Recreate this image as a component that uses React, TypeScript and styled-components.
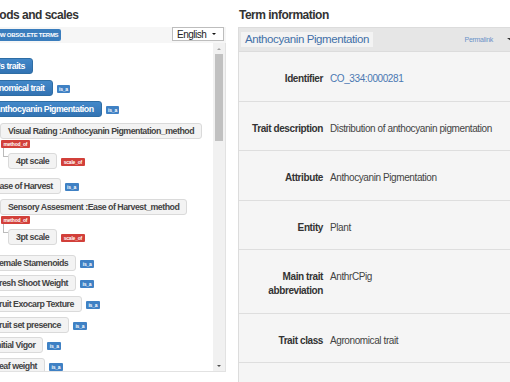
import React from "react";
import styled, { createGlobalStyle } from "styled-components";

const GlobalStyle = createGlobalStyle`
  html, body {
    margin: 0;
    padding: 0;
    background: #fff;
    overflow: hidden;
  }
  body {
    font-family: "Liberation Sans", Arial, Helvetica, sans-serif;
    color: #333;
  }
`;

const Page = styled.div`
  width: 510px;
  height: 382px;
  overflow: hidden;
  display: flex;
  padding-top: 6px;
  box-sizing: border-box;
`;

const LeftCol = styled.section`
  flex: none;
  width: 288px;
  margin-left: -62px;
  display: flex;
  flex-direction: column;
`;

const RightCol = styled.section`
  flex: none;
  width: 282px;
  margin-left: 12px;
  display: flex;
  flex-direction: column;
`;

const Heading = styled.h3<{ $inset?: number }>`
  margin: 0 0 3px;
  padding-left: ${p => p.$inset ?? 0}px;
  font-size: 12px;
  letter-spacing: -0.5px;
  line-height: 18px;
  font-weight: bold;
  color: #333;
  white-space: nowrap;
`;

const Toolbar = styled.div`
  display: flex;
  align-items: flex-end;
  justify-content: space-between;
  height: 16px;
  box-sizing: border-box;
  padding: 0 2px 2px 47px;
  background: #f6f6f6;
`;

const ObsoleteButton = styled.span`
  height: 12px;
  padding: 0 3px;
  line-height: 12px;
  font-size: 6px;
  letter-spacing: -0.3px;
  font-weight: bold;
  text-transform: uppercase;
  color: #fff;
  background: #3a7dbd;
  border-radius: 2px;
  white-space: nowrap;
`;

const LangSelect = styled.div`
  display: flex;
  align-items: center;
  justify-content: space-between;
  width: 52px;
  height: 14px;
  box-sizing: border-box;
  padding: 0 7px 0 4px;
  border: 1px solid #bdbdbd;
  background: #fff;
  font-size: 10px;
  letter-spacing: -0.5px;
  color: #222;
  align-self: flex-start;
`;

const Triangle = styled.span<{ $dir?: "up" | "down"; $size?: number; $color?: string }>`
  width: 0;
  height: 0;
  border-left: ${p => p.$size ?? 2}px solid transparent;
  border-right: ${p => p.$size ?? 2}px solid transparent;
  ${p =>
    p.$dir === "up"
      ? `border-bottom: ${(p.$size ?? 2) - 0.5}px solid ${p.$color ?? "#111"};`
      : `border-top: ${(p.$size ?? 2) - 0.5}px solid ${p.$color ?? "#111"};`}
`;

const TreeBox = styled.div`
  flex: none;
  height: 329px;
  display: flex;
  box-sizing: border-box;
  border: 1px solid #e2e2e2;
  border-top: none;
  background: #fff;
`;

const TreeContent = styled.div`
  flex: 1;
  min-width: 0;
  overflow: hidden;
  padding: 15px 0 0 19.3px;
  display: flex;
  flex-direction: column;
  align-items: flex-start;
`;

const Scrollbar = styled.div`
  flex: none;
  width: 12px;
  display: flex;
  flex-direction: column;
  background: #f1f1f1;
`;

const ScrollArrow = styled.div`
  height: 11px;
  display: flex;
  align-items: center;
  justify-content: center;
`;

const ScrollThumb = styled.div`
  height: 87px;
  margin: 0 2px;
  background: #c1c1c1;
`;

const ScrollTrack = styled.div`
  flex: 1;
`;

const LEVEL_STEP = 13.9;

const TreeRow = styled.div<{ $level: number; $gap?: number }>`
  display: flex;
  align-items: center;
  gap: 4px;
  margin-left: ${p => p.$level * LEVEL_STEP}px;
  margin-top: ${p => p.$gap ?? 0}px;
`;

const MethodBlock = styled.div<{ $level: number; $gap?: number }>`
  display: flex;
  flex-direction: column;
  align-items: flex-start;
  margin-left: ${p => p.$level * LEVEL_STEP}px;
  margin-top: ${p => p.$gap ?? 0}px;
`;

const ScaleRow = styled.div`
  position: relative;
  display: flex;
  align-items: center;
  gap: 4px;
  margin: 5px 0 0 8px;

  &::before {
    content: "";
    position: absolute;
    left: -5px;
    top: -5px;
    width: 4px;
    height: 8px;
    border-left: 1px solid #bbb;
    border-bottom: 1px solid #bbb;
  }
`;

const NodeButton = styled.span<{ $primary?: boolean }>`
  display: inline-block;
  height: 16px;
  box-sizing: border-box;
  padding: 0 7px;
  line-height: 14px;
  font-size: 8.8px;
  letter-spacing: -0.5px;
  font-weight: bold;
  white-space: nowrap;
  border-radius: 3px;
  border: 1px solid ${p => (p.$primary ? "#2e6da4" : "#dadada")};
  background: ${p => (p.$primary ? "linear-gradient(#4388c9, #3273b3)" : "#f3f3f3")};
  color: ${p => (p.$primary ? "#fff" : "#444")};
`;

type RelKind = "is_a" | "method_of" | "scale_of";

const RelBadge = styled.span<{ $kind: RelKind }>`
  display: inline-block;
  height: 8px;
  padding: 0 2.5px;
  margin-top: 2px;
  line-height: 8px;
  font-size: 5px;
  letter-spacing: -0.2px;
  font-weight: bold;
  color: #fff;
  border-radius: 1px;
  white-space: nowrap;
  background: ${p => (p.$kind === "is_a" ? "#3f81c4" : "#d2403a")};
`;

const MethodRel = styled(RelBadge)`
  margin: 1px 0 0 1px;
`;

const Panel = styled.div`
  flex: 1;
  display: flex;
  flex-direction: column;
  border: 1px solid #dcdcdc;
  border-right: none;
  border-bottom: none;
  background: #f5f5f5;
`;

const PanelHeader = styled.div`
  display: flex;
  align-items: center;
  height: 24px;
  box-sizing: border-box;
  padding: 0 5px 0 2px;
  background: #e6e6e6;
  border-bottom: 1px solid #dcdcdc;
`;

const TermTitle = styled.span`
  padding: 0 4px;
  line-height: 15px;
  font-size: 11.5px;
  letter-spacing: -0.4px;
  color: #4270a8;
  background: #f3f3f3;
  white-space: nowrap;
`;

const Permalink = styled.span`
  margin-left: auto;
  margin-right: 14px;
  font-size: 7px;
  letter-spacing: -0.3px;
  color: #6b93c8;
`;

const InfoRow = styled.div`
  display: grid;
  grid-template-columns: 84px 1fr;
  column-gap: 7px;
  padding: 20px 0 14.5px;
  border-bottom: 1px solid #dedede;
  font-size: 10px;
  letter-spacing: -0.4px;
  line-height: 14px;
`;

const InfoLabel = styled.div`
  text-align: right;
  font-weight: bold;
  color: #333;
`;

const InfoValue = styled.div<{ $link?: boolean }>`
  color: ${p => (p.$link ? "#4a78b2" : "#444")};
  white-space: nowrap;
`;

const traits = [
  { name: "Female Stamenoids", gap: 9.5 },
  { name: "Fresh Shoot Weight", gap: 4.7 },
  { name: "Fruit Exocarp Texture", gap: 4.7 },
  { name: "Fruit set presence", gap: 4.7 },
  { name: "Initial Vigor", gap: 4.7 },
  { name: "Leaf weight", gap: 4.7 },
];

const info: { label: string; value: string; link?: boolean }[] = [
  { label: "Identifier", value: "CO_334:0000281", link: true },
  { label: "Trait description", value: "Distribution of anthocyanin pigmentation" },
  { label: "Attribute", value: "Anthocyanin Pigmentation" },
  { label: "Entity", value: "Plant" },
  { label: "Main trait abbreviation", value: "AnthrCPig" },
  { label: "Trait class", value: "Agronomical trait" },
];

export default function App() {
  return (
    <>
      <GlobalStyle />
      <Page>
        <LeftCol>
          <Heading>Traits, methods and scales</Heading>
          <Toolbar>
            <ObsoleteButton>Show obsolete terms</ObsoleteButton>
            <LangSelect>
              English
              <Triangle $size={2.5} />
            </LangSelect>
          </Toolbar>
          <TreeBox>
            <TreeContent>
              <TreeRow $level={0}>
                <NodeButton $primary>Cassava's traits</NodeButton>
              </TreeRow>
              <TreeRow $level={1} $gap={5.7}>
                <NodeButton $primary>Agronomical trait</NodeButton>
                <RelBadge $kind="is_a">is_a</RelBadge>
              </TreeRow>
              <TreeRow $level={2} $gap={5.7}>
                <NodeButton $primary>Anthocyanin Pigmentation</NodeButton>
                <RelBadge $kind="is_a">is_a</RelBadge>
              </TreeRow>
              <MethodBlock $level={3} $gap={5.7}>
                <NodeButton>Visual Rating :Anthocyanin Pigmentation_method</NodeButton>
                <MethodRel $kind="method_of">method_of</MethodRel>
                <ScaleRow>
                  <NodeButton>4pt scale</NodeButton>
                  <RelBadge $kind="scale_of">scale_of</RelBadge>
                </ScaleRow>
              </MethodBlock>
              <TreeRow $level={2} $gap={9}>
                <NodeButton>Ease of Harvest</NodeButton>
                <RelBadge $kind="is_a">is_a</RelBadge>
              </TreeRow>
              <MethodBlock $level={3} $gap={5}>
                <NodeButton>Sensory Assesment :Ease of Harvest_method</NodeButton>
                <MethodRel $kind="method_of">method_of</MethodRel>
                <ScaleRow>
                  <NodeButton>3pt scale</NodeButton>
                  <RelBadge $kind="scale_of">scale_of</RelBadge>
                </ScaleRow>
              </MethodBlock>
              {traits.map(t => (
                <TreeRow key={t.name} $level={2} $gap={t.gap}>
                  <NodeButton>{t.name}</NodeButton>
                  <RelBadge $kind="is_a">is_a</RelBadge>
                </TreeRow>
              ))}
            </TreeContent>
            <Scrollbar>
              <ScrollArrow>
                <Triangle $dir="up" $size={2.5} $color="#a3a3a3" />
              </ScrollArrow>
              <ScrollThumb />
              <ScrollTrack />
              <ScrollArrow>
                <Triangle $dir="down" $size={2.5} $color="#505050" />
              </ScrollArrow>
            </Scrollbar>
          </TreeBox>
        </LeftCol>

        <RightCol>
          <Heading $inset={1}>Term information</Heading>
          <Panel>
            <PanelHeader>
              <TermTitle>Anthocyanin Pigmentation</TermTitle>
              <Permalink>Permalink</Permalink>
              <Triangle $size={4} $color="#333" />
            </PanelHeader>
            {info.map(row => (
              <InfoRow key={row.label}>
                <InfoLabel>{row.label}</InfoLabel>
                <InfoValue $link={row.link}>{row.value}</InfoValue>
              </InfoRow>
            ))}
          </Panel>
        </RightCol>
      </Page>
    </>
  );
}
